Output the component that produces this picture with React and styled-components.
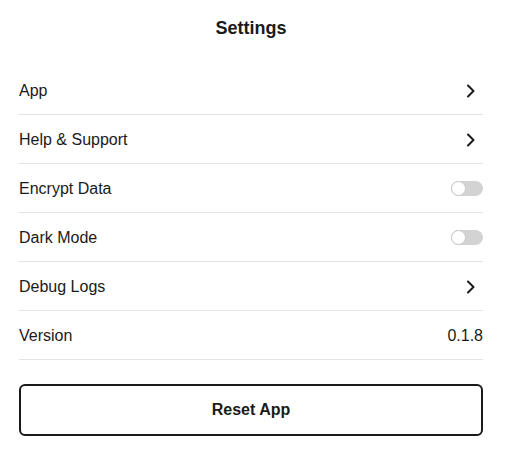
import React from 'react'
import styled, { createGlobalStyle } from 'styled-components'

const GlobalStyle = createGlobalStyle`
    body {
        margin: 0;
        background: #fff;
        font-family: "Liberation Sans", Arial, sans-serif;
        color: #1a1a1a;
    }
`

const rows = [
    { label: 'App', kind: 'link' },
    { label: 'Help & Support', kind: 'link' },
    { label: 'Encrypt Data', kind: 'toggle' },
    { label: 'Dark Mode', kind: 'toggle' },
    { label: 'Debug Logs', kind: 'link' },
    { label: 'Version', kind: 'value', value: '0.1.8' },
]

const Chevron = () => (
    <svg width="10" height="14" viewBox="0 0 10 14" fill="none">
        <path d="M2 1.5 L7.5 7 L2 12.5" stroke="#1a1a1a" strokeWidth="2" strokeLinecap="round" strokeLinejoin="round" />
    </svg>
)

const App = () => {
    return (
        <>
            <GlobalStyle />
            <Page>
                <Title>Settings</Title>
                <List>
                    {rows.map((row) => (
                        <Row key={row.label}>
                            <Label>{row.label}</Label>
                            {row.kind === 'link' && <Chevron />}
                            {row.kind === 'toggle' && (
                                <Toggle>
                                    <Knob />
                                </Toggle>
                            )}
                            {row.kind === 'value' && <Value>{row.value}</Value>}
                        </Row>
                    ))}
                </List>
                <ResetButton>Reset App</ResetButton>
            </Page>
        </>
    )
}

const Page = styled.div`
    padding: 0 23px 0 19px;
`

const Title = styled.h1`
    margin: 0;
    height: 56px;
    display: flex;
    align-items: center;
    justify-content: center;
    font-size: 18px;
    font-weight: 700;
`

const List = styled.div`
    margin-top: 10px;
    display: flex;
    flex-direction: column;
`

const Row = styled.div`
    height: 49px;
    padding-top: 1px;
    box-sizing: border-box;
    display: flex;
    align-items: center;
    justify-content: space-between;
    border-bottom: 1px solid #e3e3e3;
    svg {
        margin-right: 7px;
    }
`

const Label = styled.span`
    font-size: 16px;
`

const Value = styled.span`
    font-size: 16px;
`

const Toggle = styled.div`
    width: 32px;
    height: 15px;
    border-radius: 8px;
    background: #d3d3d3;
    display: flex;
    align-items: center;
`

const Knob = styled.div`
    width: 13px;
    height: 13px;
    border-radius: 50%;
    background: #fff;
    border: 1px solid #c8c8c8;
`

const ResetButton = styled.button`
    margin-top: 24px;
    width: 100%;
    height: 52px;
    background: #fff;
    border: 2px solid #1a1a1a;
    border-radius: 6px;
    font-family: "Liberation Sans", Arial, sans-serif;
    font-size: 16px;
    font-weight: 700;
    color: #1a1a1a;
    cursor: pointer;
`

export default App
